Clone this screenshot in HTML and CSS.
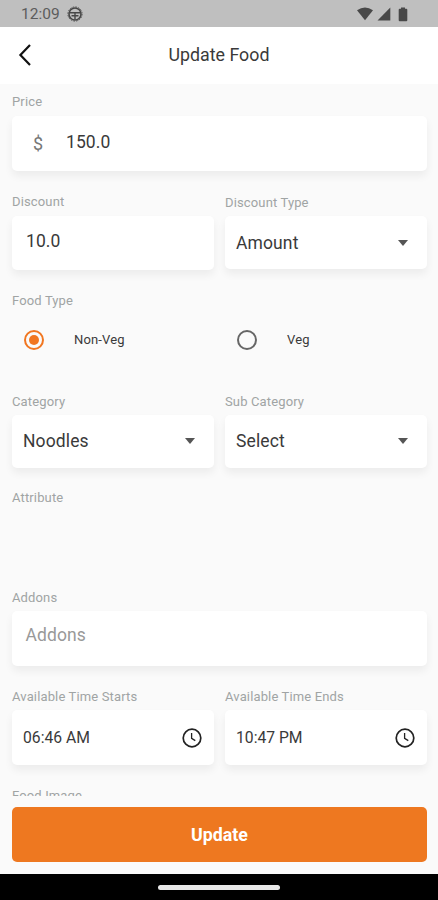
FILE: index.html
```html
<!DOCTYPE html>
<html lang="en">
<head>
<meta charset="utf-8">
<title>Update Food</title>
<link rel="stylesheet" href="styles.css">
</head>
<body>
<div class="screen">
  <div class="status">
    <span class="clock">12:09</span>
    <svg class="wheel" width="16" height="16" viewBox="0 0 16 16" fill="none" stroke="#484848"><circle cx="8" cy="8" r="6" stroke-width="1.6"/><circle cx="8" cy="8" r="7.1" stroke-width=".9" stroke-dasharray="1.6 1.2"/><path d="M2.5 6.8h11M4.500 9.700h7M8 7v6.500" stroke-width="1.4"/></svg>
    <div class="signals">
      <svg width="18" height="14" viewBox="0 0 18 14" fill="#484848"><path d="M1 3.3Q9-2.3 17 3.3L9 13.2z"/></svg>
      <svg width="14" height="14" viewBox="0 0 14 14" fill="#484848"><path d="M13.3.5v13H.5z"/></svg>
      <svg width="10" height="15" viewBox="0 0 10 15" fill="#484848"><path d="M3 .5h4v1.2h1.3q1 0 1 1v10.6q0 1-1 1H1.7q-1 0-1-1V2.7q0-1 1-1H3z"/></svg>
    </div>
  </div>
  <header class="appbar">
    <svg class="back" width="14" height="24" viewBox="0 0 14 24" fill="none" stroke="#111" stroke-width="2.2"><path d="M12 2 2.4 12 12 22"/></svg>
    <h1>Update Food</h1>
  </header>
  <main class="form">
    <div class="field price">
      <label>Price</label>
      <div class="box"><span class="currency">$</span><span class="value">150.0</span></div>
    </div>
    <div class="row discounts">
      <div class="field discount">
        <label>Discount</label>
        <div class="box"><span class="value">10.0</span></div>
      </div>
      <div class="field type">
        <label>Discount Type</label>
        <div class="box select"><span>Amount</span><i class="caret"></i></div>
      </div>
    </div>
    <div class="field food-type">
      <label>Food Type</label>
      <div class="row radios">
        <div class="option"><span class="radio on"></span><span>Non-Veg</span></div>
        <div class="option"><span class="radio"></span><span>Veg</span></div>
      </div>
    </div>
    <div class="row categories">
      <div class="field">
        <label>Category</label>
        <div class="box select"><span>Noodles</span><i class="caret"></i></div>
      </div>
      <div class="field">
        <label>Sub Category</label>
        <div class="box select"><span>Select</span><i class="caret"></i></div>
      </div>
    </div>
    <div class="field attribute"><label>Attribute</label></div>
    <div class="field addons">
      <label>Addons</label>
      <div class="box"><span class="value hint">Addons</span></div>
    </div>
    <div class="row times">
      <div class="field">
        <label>Available Time Starts</label>
        <div class="box time"><span>06:46 AM</span><svg width="20" height="20" viewBox="0 0 20 20" fill="none" stroke="#222"><circle cx="10" cy="10" r="8.8" stroke-width="1.7"/><path d="M9.6 5v5.4l3.7 2.2" stroke-width="1.3"/></svg></div>
      </div>
      <div class="field">
        <label>Available Time Ends</label>
        <div class="box time"><span>10:47 PM</span><svg width="20" height="20" viewBox="0 0 20 20" fill="none" stroke="#222"><circle cx="10" cy="10" r="8.8" stroke-width="1.7"/><path d="M9.6 5v5.4l3.7 2.2" stroke-width="1.3"/></svg></div>
      </div>
    </div>
    <div class="field image"><label>Food Image</label></div>
  </main>
  <div class="actions"><button class="update">Update</button></div>
  <div class="navbar"><span class="handle"></span></div>
</div>
</body>
</html>
```
FILE: styles.css
```css
* { box-sizing: border-box; }
body {
  margin: 0;
  font-family: Roboto, sans-serif;
  color: #3a3a3a;
  background: #fafafa;
}
.screen { display: flex; flex-direction: column; width: 438px; height: 900px; overflow: hidden; }

.status { display: flex; align-items: center; height: 27px; padding: 1px 30px 0 21px; background: #bfbfbf; }
.clock { width: 46px; font-size: 15.5px; line-height: 18px; color: #5c5c5c; }
.signals { display: flex; align-items: center; gap: 3px; margin-left: auto; }
.signals svg:last-child { margin-left: 4px; }

.appbar { display: flex; align-items: center; height: 57px; padding: 0 0 1px 18px; background: #fff; }
.appbar h1 { flex: 1; margin: 0 32px 2px 0; text-align: center; font-size: 17.8px; font-weight: 400; }

.form { height: 712px; padding: 10px 11px 0 12px; overflow: hidden; }
.row { display: grid; grid-template-columns: 201.5px 202px; column-gap: 11.5px; }
.field label { display: block; height: 22px; font-size: 13px; line-height: 16px; letter-spacing: .14px; color: #a0a4a4; white-space: nowrap; }
.box {
  display: flex;
  align-items: center;
  height: 55px;
  border-radius: 5px;
  background: #fff;
  box-shadow: 0 5px 8px rgba(0, 0, 0, .06);
  font-size: 17.5px;
}
.value { padding-bottom: 4px; letter-spacing: .1px; }
.price { height: 100px; }
.currency { width: 33px; margin-left: 21px; font-size: 18px; color: #777; }
.discounts { height: 99px; }
.discount .box { padding-left: 14px; height: 54px; }
.type label, .categories label, .addons label, .times label, .image label { padding-top: 1px; }
.type .box { height: 53px; }
.select { justify-content: space-between; padding: 0 19px 0 11px; letter-spacing: .12px; }
.categories .select { padding-bottom: 1px; }
.caret { border: 5px solid transparent; border-top: 6px solid #555; border-bottom: 0; }

.food-type { height: 100px; }
.radios { height: 49px; align-items: center; }
.option { display: flex; align-items: center; gap: 30px; padding-left: 12px; font-size: 13px; letter-spacing: .15px; }
.radio { display: grid; place-items: center; width: 20px; height: 20px; border: 2px solid #666; border-radius: 50%; }
.radio.on { border-color: #f17620; }
.radio.on::after { content: ""; width: 10px; height: 10px; border-radius: 50%; background: #f17620; }

.categories { height: 97px; }
.categories .box { height: 53px; }
.attribute { height: 99px; }
.addons { height: 99px; }
.addons .box { padding-left: 13.5px; }
.value.hint { padding-bottom: 7px; color: #999; }
.times { height: 99px; }
.time { justify-content: space-between; padding: 0 12px 0 11px; font-size: 15.7px; }

.actions { padding: 11px 11px 12px 12px; }
.update { display: block; width: 100%; height: 55px; border: 0; border-radius: 5px; background: #ee7820; color: #fff; font: 700 17.8px Roboto, sans-serif; }
.navbar { display: flex; justify-content: center; height: 26px; padding-top: 11px; background: #000; }
.handle { width: 122px; height: 5px; border-radius: 3px; background: #e8e8e8; }
```
